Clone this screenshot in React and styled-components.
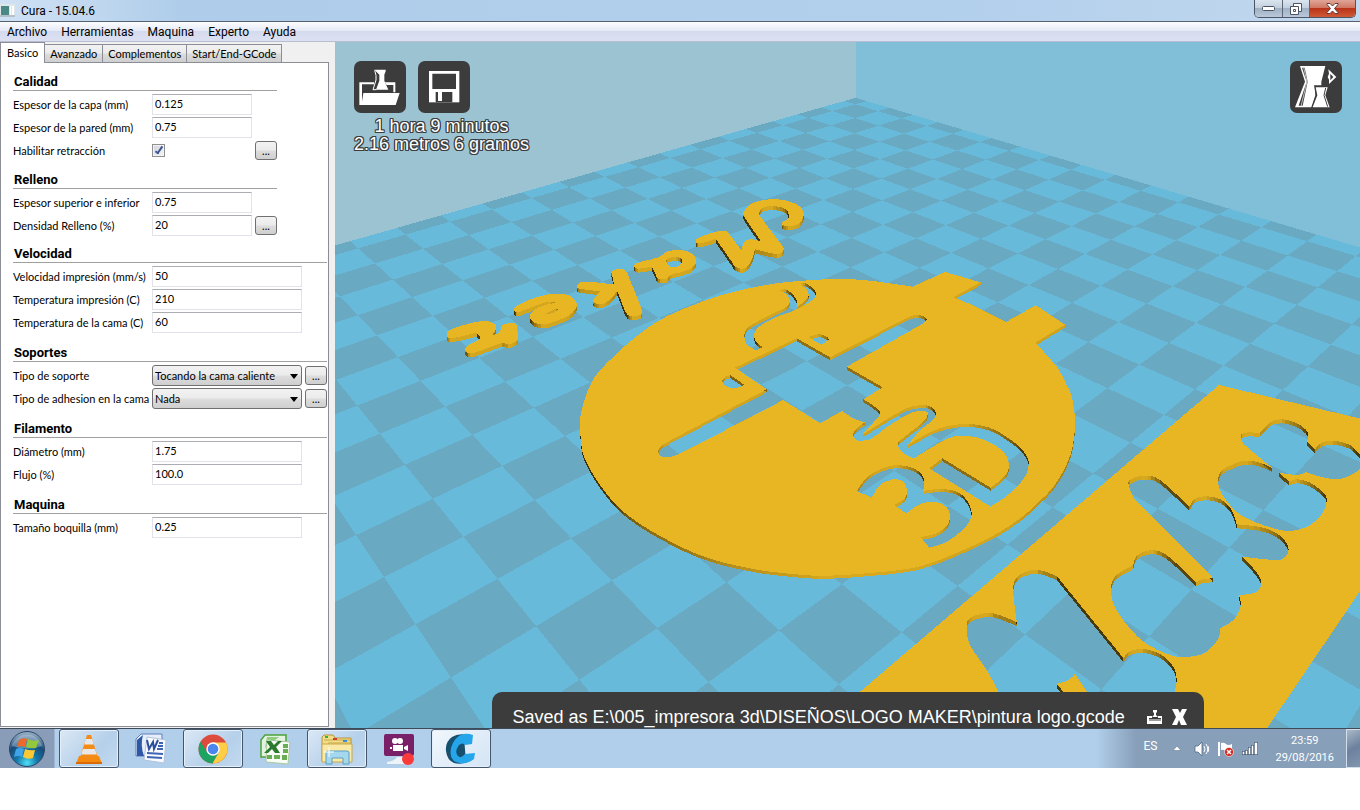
import React from "react";
import styled, { createGlobalStyle } from "styled-components";

const GlobalStyle = createGlobalStyle`
  *, *::before, *::after { box-sizing: border-box; }
  body { margin: 0; background: #fff; color: #000; font: 12px/16px Roboto, "Open Sans", sans-serif; }
  button, input, select { margin: 0; font: inherit; color: inherit; }
`;

/* ---------- window frame ---------- */

const Desktop = styled.div`
  display: flex;
  flex-direction: column;
  height: calc(100vh - 42px);
  min-height: 640px;
`;

const TitleBar = styled.header`
  display: flex;
  justify-content: space-between;
  align-items: flex-start;
  height: 22px;
  padding-right: 4px;
  border-bottom: 1px solid #56606e;
  background: linear-gradient(90deg, #cfe1f4 0, #c3d9f0 80px, #afcdea 180px, #b2cfec 70%, #c2d8ee 100%);
`;

const TitleText = styled.h1`
  display: flex;
  align-items: center;
  gap: 6px;
  height: 21px;
  margin: 0;
  font-size: 12px;
  font-weight: 400;
`;

const CaptionButtons = styled.div`
  display: flex;
  height: 18px;
  border: 1px solid #4b5565;
  border-top: 0;
  border-radius: 0 0 5px 5px;
  overflow: hidden;
`;

const CaptionButton = styled.button`
  display: grid;
  place-items: center;
  width: ${(p) => (p.$danger ? 46 : 27)}px;
  padding: 0;
  border: 0;
  border-left: ${(p) => (p.$first ? "0" : "1px solid #5c6675")};
  background: ${(p) =>
    p.$danger
      ? "linear-gradient(#e0a598 0, #d07863 45%, #b9341a 50%, #cf5a35 100%)"
      : "linear-gradient(#dbe5f0 0, #c2cfde 45%, #a0b1c5 50%, #b9c8da 100%)"};
`;

const MenuBar = styled.nav`
  display: flex;
  gap: 14px;
  height: 20px;
  padding: 1px 7px 0;
  border-bottom: 1px solid #b9bdd4;
  background: linear-gradient(#fcfdff 0, #e6eaf6 45%, #d5dbee 50%, #dce1f2 100%);
`;

const MenuItem = styled.button`
  padding: 0;
  border: 0;
  background: none;
  line-height: 18px;
`;

const Workspace = styled.main`
  display: flex;
  flex: 1;
  min-height: 0;
`;

/* ---------- settings panel ---------- */

const Sidebar = styled.aside`
  display: flex;
  flex-direction: column;
  flex: 0 0 335px;
  padding: 0 6px 1px 0;
  background: #f0f0f0;
  font: 11px/14px Lato, Roboto, sans-serif;
`;

const TabStrip = styled.div`
  display: flex;
  align-items: flex-end;
  height: 20px;
`;

const Tab = styled.button`
  position: relative;
  height: ${(p) => (p.$active ? 21 : 18)}px;
  margin: 0 -1px ${(p) => (p.$active ? -1 : 0)}px 0;
  padding: 0 ${(p) => (p.$active ? 6 : 5)}px;
  border: 1px solid #8b8e97;
  border-bottom: 0;
  background: ${(p) => (p.$active ? "#fff" : "linear-gradient(#f2f2f2 0, #ebebeb 48%, #dcdcdc 52%, #cfcfcf 100%)")};
  z-index: ${(p) => (p.$active ? 1 : 0)};
`;

const TabPage = styled.form`
  flex: 1;
  min-height: 0;
  padding: 0 1px 0 12px;
  border: 1px solid #8b8e97;
  background: #fff;
`;

const Group = styled.fieldset`
  width: ${(p) => (p.$wide ? 314 : 264)}px;
  margin: 0;
  padding: 0;
  border: 0;
`;

const GroupTitle = styled.legend`
  display: flex;
  align-items: flex-end;
  width: 100%;
  height: ${(p) => p.$height}px;
  margin-bottom: 3px;
  padding: 0 0 1px 1px;
  border-bottom: 1px solid #a0a0a0;
  font: 700 13px/15px Roboto, "Open Sans", sans-serif;
`;

const Row = styled.div`
  display: grid;
  grid-template-columns: 136px 1fr 22px;
  column-gap: 3px;
  align-items: center;
  height: 21px;
  margin-bottom: ${(p) => (p.$last ? 0 : 2)}px;
`;

const Label = styled.label`
  white-space: nowrap;
`;

const TextField = styled.input`
  width: 100%;
  height: 21px;
  padding: 0 2px 2px;
  border: 1px solid #e2e3ea;
  border-top-color: #abadb3;
  background: #fff;
`;

const CheckBox = styled.input`
  position: relative;
  appearance: none;
  width: 13px;
  height: 13px;
  border: 1px solid #8e8f8f;
  background: linear-gradient(135deg, #cfd3da, #f6f7f9);
  box-shadow: inset 0 0 0 1px #f4f4f4;
  &:checked::after {
    content: "";
    position: absolute;
    left: 4px;
    top: 0;
    width: 4px;
    height: 9px;
    border: solid #3f5693;
    border-width: 0 2px 2px 0;
    transform: rotate(35deg);
  }
`;

const SelectFrame = styled.span`
  position: relative;
  display: block;
  svg {
    position: absolute;
    right: 4px;
    top: 9px;
    pointer-events: none;
  }
`;

const Select = styled.select`
  appearance: none;
  display: block;
  width: 100%;
  height: 21px;
  padding: 0 16px 0 2px;
  border: 1px solid #707070;
  border-radius: 3px;
  background: linear-gradient(#f2f2f2 0, #ebebeb 48%, #dddddd 52%, #cfcfcf 100%);
`;

const MoreButton = styled.button`
  width: 22px;
  height: 19px;
  padding: 0;
  border: 1px solid #707070;
  border-radius: 3px;
  background: linear-gradient(#f2f2f2 0, #ebebeb 48%, #dddddd 52%, #cfcfcf 100%);
  line-height: 14px;
`;

/* ---------- 3D view ---------- */

const View = styled.section`
  position: relative;
  flex: 1;
  min-width: 0;
  overflow: hidden;
  background: #66b9d9;
  font: 18px/18px "Liberation Sans", Arial, sans-serif;
`;

const Scene = styled.svg`
  display: block;
  width: 100%;
  height: 100%;
`;

const Overlay = styled.div`
  position: absolute;
  inset: 0;
  display: flex;
  justify-content: space-between;
  align-items: flex-start;
  padding: 19px 18px 0 19px;
`;

const Tools = styled.div`
  display: flex;
  gap: 12px;
`;

const Tool = styled.button`
  display: block;
  width: 52px;
  height: 52px;
  padding: 0;
  border: 0;
  border-radius: 7px;
  background: #3c3c3c;
`;

const PrintInfo = styled.p`
  margin: 4px 0 0;
  color: #fff;
  text-align: center;
  text-shadow: 1px 0 #3c3c3c, -1px 0 #3c3c3c, 0 1px #3c3c3c, 0 -1px #3c3c3c, 1px 1px #3c3c3c, -1px -1px #3c3c3c,
    1px -1px #3c3c3c, -1px 1px #3c3c3c;
`;

const Notice = styled.div`
  position: absolute;
  left: 50%;
  bottom: 0;
  transform: translateX(-50%);
  display: flex;
  align-items: center;
  gap: 9px;
  min-width: 712px;
  height: 36px;
  padding: 13px 17px 0 21px;
  border-radius: 10px 10px 0 0;
  background: #3c3c3c;
  color: #fff;
  white-space: nowrap;
`;

const NoticeText = styled.span`
  flex: 1;
`;

const NoticeButton = styled.button`
  display: block;
  padding: 0;
  border: 0;
  background: none;
  svg { display: block; }
`;

/* ---------- task bar ---------- */

const TaskBar = styled.footer`
  display: flex;
  height: 40px;
  border-top: 1px solid #3f4a58;
  background: linear-gradient(90deg, #8a9db8 54px, #b1cfeb 55px);
`;

const StartButton = styled.button`
  display: grid;
  place-items: center;
  width: 54px;
  margin-right: 5px;
  padding: 0;
  border: 0;
  background: none;
`;

const TaskButton = styled.button`
  display: grid;
  place-items: center;
  width: 60px;
  margin-right: 2px;
  padding: 0;
  border: 1px solid ${(p) => (p.$open ? "#46566a" : "transparent")};
  border-radius: 3px;
  background: ${(p) =>
    p.$active
      ? "linear-gradient(135deg, #f2f7fc, #d3e4f5)"
      : p.$open
      ? "linear-gradient(135deg, #dbe8f5, #b5d0ea 60%, #c3daf0)"
      : "none"};
  box-shadow: ${(p) => (p.$open ? "inset 0 0 0 1px #e3effa" : "none")};
`;

const Tray = styled.div`
  display: flex;
  align-items: center;
  gap: 8px;
  margin-left: auto;
  padding-left: 48px;
  background: linear-gradient(90deg, #b1cfeb, #889fb9 40px);
  color: #fff;
`;

const Language = styled.span`
  margin: 0 8px 6px 0;
`;

const TrayIcon = styled.button`
  display: block;
  margin-right: ${(p) => (p.$apart ? 5 : 0)}px;
  padding: 0;
  border: 0;
  background: none;
  svg { display: block; }
`;

const Clock = styled.time`
  margin: 0 4px 0 9px;
  font-size: 11px;
  line-height: 17px;
  text-align: center;
`;

const ShowDesktop = styled.button`
  align-self: stretch;
  width: 14px;
  padding: 0;
  border: 1px solid #d3deea;
  border-right: 0;
  background: linear-gradient(150deg, #a9b8ca, #6c819d 50%, #8296b0);
`;

/* ---------- build platform geometry ---------- */

/* Perspective projection of platform cells to the view plane. */
const project = (u, v) => {
  const w = 1 - 0.02246 * u - 0.021414 * v;
  return [(855.4 + 2.9042 * u - 40.8128 * v) / w, (104.3 + 4.3636 * u + 4.2828 * v) / w];
};

const polygon = (points) => "M" + points.map((p) => p[0].toFixed(1) + " " + p[1].toFixed(1)).join("L") + "Z";

const LOW = -0.5;
const HIGH = 20;
const clampCell = (n) => Math.max(LOW, Math.min(HIGH, n));
const cell = (a, b, c, d) => polygon([project(a, b), project(c, b), project(c, d), project(a, d)]);

const floorPath = cell(LOW, LOW, HIGH, HIGH);
let darkCells = "";
for (let i = -1; i < 20; i++) {
  for (let j = -1; j < 20; j++) {
    if ((i + j) % 2 === 0) darkCells += cell(clampCell(i), clampCell(j), clampCell(i + 1), clampCell(j + 1));
  }
}

/*
 * Outlines are flat lists "x y" on a grid three times finer than the view,
 * relative to an origin. A trailing "c" marks a corner; other points are
 * joined by a smooth curve.
 */
const outline = (ox, oy, text) => {
  const pts = text.split(",").map((t) => {
    const [x, y, c] = t.trim().split(" ");
    return { x: ox + x / 3, y: oy + y / 3, c: c === "c" };
  });
  const n = pts.length;
  const out = [];
  for (let i = 0; i < n; i++) {
    const p1 = pts[i];
    const p2 = pts[(i + 1) % n];
    if (p1.c && p2.c) {
      out.push([p1.x, p1.y]);
      continue;
    }
    const p0 = p1.c ? p1 : pts[(i - 1 + n) % n];
    const p3 = p2.c ? p2 : pts[(i + 2) % n];
    for (let s = 0; s < 4; s++) {
      const t = s / 4;
      const mix = (a, b, c, d) =>
        0.5 * (2 * b + (c - a) * t + (2 * a - 5 * b + 4 * c - d) * t * t + (3 * b - a - 3 * c + d) * t * t * t);
      out.push([mix(p0.x, p1.x, p2.x, p3.x), mix(p0.y, p1.y, p2.y, p3.y)]);
    }
  }
  return out;
};

const GOLD = [232, 182, 34];
const LIGHT = [
  [0, 0.55],
  [35, 0.75],
  [60, 0.9],
  [90, 0.93],
  [105, 0.75],
  [121, 0.6],
  [138, 0.32],
  [180, 0.2],
];

/* Shade of a side wall, from the direction its edge runs in. */
const wallColour = ([ax, ay], [bx, by]) => {
  let nx = -(by - ay);
  let ny = bx - ax;
  if (ny < 0) {
    nx = -nx;
    ny = -ny;
  }
  const angle = (Math.atan2(ny, nx) * 180) / Math.PI;
  let k = 1;
  while (k < LIGHT.length - 1 && LIGHT[k][0] < angle) k++;
  const [a0, f0] = LIGHT[k - 1];
  const [a1, f1] = LIGHT[k];
  const f = f0 + ((f1 - f0) * (angle - a0)) / (a1 - a0);
  return `rgb(${GOLD.map((c) => Math.round(c * f)).join(",")})`;
};

/* The first `hidden` loops have side walls that face away from the camera. */
const Solid = ({ loops, depth, hidden = 0 }) => (
  <g>
    {loops.slice(hidden).map((loop, l) =>
      loop.map((p, i) => {
        const q = loop[(i + 1) % loop.length];
        return (
          <path
            key={l + "-" + i}
            d={polygon([p, q, [q[0], q[1] + depth], [p[0], p[1] + depth]])}
            fill={wallColour(p, q)}
          />
        );
      })
    )}
    <path d={loops.map(polygon).join("")} fill="#e8b622" fillRule="evenodd" />
  </g>
);

const disc = [
  outline(570, 260, "30 490,35 450,52 395,75 350,105 315,180 245,270 180,370 135,480 98,600 73,700 62,810 57,900 62,1028 80 c,1125 36 c,1232 67 c,1150 112 c,1210 137,1308 186 c,1397 136 c,1485 194 c,1396 248 c,1460 320,1490 375,1505 410,1515 485,1503 580,1458 670,1400 732,1340 783,1245 840,1100 903,990 930,800 946,700 945,550 927,405 891,270 828,160 755,90 675,42 590,33 540"),
  outline(640, 270, "420 62 c,437 58,458 73,470 92,472 110 c,495 92,506 78,500 58,480 42 c,495 39,518 55,527 70,520 88,470 118,400 145,355 172,342 195,350 218,368 231 c,348 242 c,320 222,313 195,325 172,370 145,430 116,447 102,450 90,440 72"),
  outline(640, 270, "470 205 c,570 262 c,805 142 c,830 134,852 140,860 150,845 163 c,620 290 c,728 352 c,670 388 c,700 407,721 428,705 452,668 493 c,780 425,825 408,865 407,887 426,880 448,840 482,803 525 c,850 498,900 475,950 464,1000 463,1060 478,1120 515,1155 550,1166 580,1155 620,1110 670,1052 710 c,868 595 c,907 565 c,1052 653 c,1095 618,1107 585,1090 545,1040 512,980 498,930 503,875 532,822 565 c,785 545,774 520,795 500,845 460,862 438,858 424,815 428,750 465,700 502,675 511,650 510,639 495,650 475,675 457 c,640 445,606 423 c,540 460 c,430 390 c,118 552 c,85 562,60 556,55 540,70 523 c,380 358 c,285 293 c"),
  outline(640, 270, "505 201 c,535 193,560 200,567 209 c,545 224 c"),
  outline(640, 270, "270 315 c,314 345 c,285 354,262 350,247 335,255 322"),
  outline(840, 390, "50 303 c,70 275,100 248,150 228,190 227,230 240,252 266,250 303 c,300 297,350 305,380 330,395 368,385 400,350 435,310 460,268 473 c,242 441 c,290 430,322 405,330 375,315 348,280 335,240 343,198 370 c,163 345 c,195 325,201 300,190 275,160 268,120 285,95 323 c"),
];

const letters = [
  outline(430, 190, "797 152,808 143,850 127,885 122,900 135,935 182 c,943 155,965 148,994 155 c,943 80,945 60,970 38,1020 28,1070 32,1110 50,1121 75,1110 98,1080 109,1058 105,1056 96,1074 86,1075 70,1065 56,1030 48,1000 53,988 68,995 85,1055 165,1061 180,1040 192,975 178 c,965 210,945 234,918 232,905 215,858 147 c,825 157,803 160"),
  outline(430, 190, "612 228,625 218,685 202,710 185,750 180,785 190,799 212,790 230,765 243,725 254,710 266,685 266,675 250,665 230 c,625 236"),
  outline(430, 190, "708 212,725 202,750 203,756 215,745 228,722 230"),
  outline(430, 190, "545 245,565 237,587 242,600 270,635 360,625 376,600 378,585 362,562 303 c,545 323,520 342,495 340,490 330,510 304 c,450 296,442 288,450 278,470 275,552 283 c,548 262"),
  outline(430, 190, "253 356,270 342,320 322,370 311,415 315,437 335,438 355,410 380,350 402,318 400,300 385,303 370,330 350,378 338 c,355 335,310 350,262 367"),
  outline(430, 190, "345 372 c,375 357,385 359 c,365 370"),
  outline(430, 190, "50 435,60 420,120 400,165 393,195 402,198 415,188 435 c,208 428,218 405,240 400,258 403,263 430,263 450,240 462,215 458 c,130 489,108 485,105 475,120 462,150 445,140 428 c,75 443,55 443"),
];

const plate = [
  outline(860, 380, "1077 15 c,1560 130 c,1560 545 c,1150 1150 c,-250 1149 c"),
  outline(860, 380, "1143 168,1155 158,1200 158 c,1230 128,1265 118,1310 130,1342 155,1342 185 c,1365 208 c,1385 188,1420 182,1470 195,1500 225,1510 245,1490 275,1440 297,1390 292,1338 277 c,1310 285,1258 278 c,1287 305 c,1310 298,1350 308,1390 338,1400 360,1390 395,1350 435,1290 453,1230 442,1150 410,1110 375,1080 330,1075 295,1090 268,1150 243,1200 248,1237 264 c,1190 225,1150 190"),
  outline(860, 380, "805 310,820 295,855 287,900 300,988 380 c,1005 357,1040 349,1085 360,1115 390,1130 433 c,1200 441,1250 460,1280 490,1285 515,1270 535,1240 540,1145 530 c,1180 565,1203 600,1200 625,1180 640,1137 645 c,1142 680,1120 720,1080 745 c,1075 775,1040 815,990 830,930 825,850 785,790 720,760 670,753 620,770 585,820 555 c,830 528,870 511,920 525,1008 607 c,1030 597,1060 595 c,820 352 c"),
  outline(860, 380, "320 740,327 718,350 705,400 700,470 726 c,460 640,465 600,490 578,535 570,590 588 c,790 834 c,810 814,850 807,900 822,940 860,950 900,945 935,940 1000 c,450 1000 c,415 935,380 870,330 795"),
  outline(860, 380, "590 912 c,625 900,645 882 c,700 965 c,640 970 c"),
];

const Platform = () => (
  <Scene viewBox="335 42 1025 686" preserveAspectRatio="xMidYMid slice" shapeRendering="crispEdges" role="img" aria-label="Vista 3D">
    <path d="M-200 0H856V400H-200Z" fill="#9bc3d2" />
    <path d="M856 0H1700V500H856Z" fill="#80bfd7" />
    <path d={floorPath} fill="#67bada" />
    <path d={darkCells} fill="#69a9c2" />
    <Solid loops={letters} depth={4} />
    <Solid loops={disc} depth={3} />
    <Solid loops={plate} depth={4} hidden={1} />
  </Scene>
);

/* ---------- icons ---------- */

const LoadIcon = () => (
  <svg width="52" height="52" viewBox="0 0 156 156" fill="#fff">
    <path d="M16 132V64h44v6H24v52l4-26h109l-12 36z" />
    <path d="M92 64h32v30h-6V72H98z" />
    <path d="M61 26h34v5l-4 10v18l12 27H66l10-27V41z" />
    <path d="M62 28l4 15v14l-9 29h10" fill="none" stroke="#fff" strokeWidth="3" />
  </svg>
);

const SaveIcon = () => (
  <svg width="52" height="52" viewBox="0 0 156 156">
    <path d="M33 30h91v94H33z" fill="#fff" />
    <path d="M43 38h71v46H43zM53 93h50v31H53z" fill="#3c3c3c" />
    <path d="M60 93h12v27H60z" fill="#fff" />
  </svg>
);

const ViewModeIcon = () => (
  <svg width="52" height="52" viewBox="0 0 156 156" fill="#fff">
    <path d="M30 15h76L94 62v16H74l2 25-12 36H15l30-77z" />
    <path d="M36 20l14 42-24 72h12l15-72-9-42z" fill="#3c3c3c" />
    <path d="M41 20l10 42-18 74" fill="none" stroke="#fff" strokeWidth="2" />
    <path d="M72 73h45l-9 29 15 42H63l15-42z" fill="#3c3c3c" />
    <path d="M77 79h36l-7 24 13 36H68l14-36z" />
    <path d="M107 81l-5 22 11 34" fill="none" stroke="#3c3c3c" strokeWidth="3" />
    <path d="M115 25l24 23-22 21V56l-4-8 4-10zM121 38v20l9-10z" fillRule="evenodd" />
  </svg>
);

const SmallEjectIcon = () => (
  <svg width="16" height="16" viewBox="0 0 16 16">
    <path d="M0 7h5v2H2v1h12V9h-3V7h4v8H0zM6 1h4v2l-1 1v2l2 2H5l2-2V4L6 3z" fill="#fff" />
    <path d="M2 11h12" stroke="#3c3c3c" strokeWidth="1" />
  </svg>
);

const CloseNoticeIcon = () => (
  <svg width="15" height="16" viewBox="0 0 15 16">
    <path d="M0 0h6l2 4 2-4h5l-4 8 4 8h-6l-2-5-2 5H0l4-8z" fill="#fff" />
  </svg>
);

const StartOrb = () => (
  <svg width="38" height="38" viewBox="0 0 38 38">
    <defs>
      <radialGradient id="orb" cx="50%" cy="90%" r="85%">
        <stop offset="0" stopColor="#4fe0f5" />
        <stop offset="0.35" stopColor="#1478ab" />
        <stop offset="0.7" stopColor="#184a78" />
        <stop offset="1" stopColor="#8ea9c2" />
      </radialGradient>
    </defs>
    <circle cx="19" cy="19" r="17.5" fill="url(#orb)" stroke="#2a4665" />
    <path d="M4 16a15.5 15.5 0 0 1 30 0q-15 5-30 0" fill="#fff" opacity=".3" />
    <path d="M11 10q4-3 8-1l-2 8q-4-2-8 0z" fill="#ee6a2a" />
    <path d="M20 9q5 3 11 1l-3 8q-5 1-10-1z" fill="#93c83d" />
    <path d="M8 19q4-2 8 0l-2 8q-4-2-8 0z" fill="#3fa3e8" />
    <path d="M17 19q5 2 10 1l-2 8q-5 2-10-1z" fill="#fbc934" />
  </svg>
);

const VlcIcon = () => (
  <svg width="32" height="32" viewBox="0 0 32 32">
    <path d="M6 23h20l3 8H3z" fill="#f58a0c" />
    <path d="M3 29h26v2H3z" fill="#d96a05" />
    <path d="M14 2h4l7 23q-9 4-18 0z" fill="#f48b17" />
    <path d="M12.800 6h6.400l1.600 5.500h-9.600zM10 16h12l1.800 5.500H8.200z" fill="#e8e8e8" />
  </svg>
);

const WordIcon = () => (
  <svg width="32" height="32" viewBox="0 0 32 32">
    <path d="M6 1h21v22H1V6z" fill="#e6eefa" stroke="#5f7fbd" />
    <path d="M8 2Q5 12 9 23H2V7z" fill="#2e58a6" />
    <path d="M12 4l19 3-2 23-20-3z" fill="#f7faff" stroke="#b4c3dd" />
    <path d="M12 7l2 9 4-7 1 7 4-9" fill="none" stroke="#2a4f9c" strokeWidth="2" />
    <path d="M24 10h4M23 13h5M22 16h6M12 20l16 1M12 24l15 1" stroke="#3e65b5" strokeWidth="2" />
  </svg>
);

const ChromeIcon = () => (
  <svg width="30" height="30" viewBox="0 0 30 30">
    <circle cx="15" cy="15" r="14.500" fill="#dd4b3e" />
    <path d="M2.500 7.700A14.500 14.500 0 0 0 14.500 29.500L21.500 18 15 15 9 18z" fill="#1da462" />
    <path d="M15 8.500h13A14.500 14.500 0 0 1 14.500 29.500L21 18z" fill="#ffcd46" />
    <circle cx="15" cy="15" r="6.700" fill="#fff" />
    <circle cx="15" cy="15" r="5.300" fill="#4a86ee" />
  </svg>
);

const ExcelIcon = () => (
  <svg width="32" height="32" viewBox="0 0 32 32">
    <path d="M6 2h21v22H2V7z" fill="#e4f2e0" stroke="#4ba33a" strokeWidth="1.500" />
    <path d="M8 4h12L6 15z" fill="#8fce7f" />
    <path d="M8 7l23 2-2 22-22-2z" fill="#f8fcf6" stroke="#a9c9a0" />
    <path d="M7 8h5l3 4 4-4h4l-6 6 4 6h-5l-3-4-4 4H5l6-6z" fill="#2b7a2d" />
    <path d="M24 11h5v4h-5zM24 16h5v4h-5zM8 22h5v4H8zM15 22h6v4h-6zM23 22h5v5h-5z" fill="#69ad55" />
  </svg>
);

const ExplorerIcon = () => (
  <svg width="34" height="32" viewBox="0 0 34 32">
    <path d="M2 4l2-2h9l2 3h16v23H2z" fill="#f3dc86" stroke="#b5953d" />
    <path d="M4 7h27M8 10h24" stroke="#c9a94e" />
    <path d="M5 3h3v2H5z" fill="#2fb34a" />
    <path d="M13 5h4v2h-4z" fill="#d33d2f" />
    <path d="M23 7h4v2h-4z" fill="#3a8fd6" />
    <path d="M2 11h30v18H2z" fill="#fae9a5" stroke="#c9a94e" />
    <path d="M6 31V20q0-2 2-2h19q2 0 2 2v11h-6v-6H12v6z" fill="#a5d8ee" stroke="#5b9fc4" />
    <path d="M9 14v10M4 19h10" stroke="#fff" />
  </svg>
);

const RecorderIcon = () => (
  <svg width="32" height="32" viewBox="0 0 32 32">
    <path d="M4 29q8-1 10-5h5q2 4 9 5v2H4z" fill="#eef3f8" />
    <rect x="1" y="1" width="30" height="22" rx="2" fill="#7a2068" />
    <circle cx="12" cy="8" r="3" fill="#fff" />
    <circle cx="17" cy="8" r="3" fill="#fff" />
    <path d="M10 12h10v6H10zM7 14h2v2H7zM21 14l4-2v6l-4-2z" fill="#fff" />
    <circle cx="25" cy="26" r="6" fill="#fb3a3c" />
  </svg>
);

const CuraIcon = () => (
  <svg width="34" height="32" viewBox="0 0 34 32">
    <path d="M24 2Q14 0 8 4Q1 9 2 18Q3 27 10 30Q17 32 22 29L20 4z" fill="#174f6e" />
    <path d="M29 2l-1 9-7 1q-2-3-6 0-5 7-1 11 3 3 7-2l10-1-1 6q-9 7-18 3-7-3-5-14 3-11 12-14 5-1 10 1z" fill="#25a5ea" />
  </svg>
);

const tasks = [
  { name: "VLC", icon: VlcIcon, open: true },
  { name: "Word", icon: WordIcon },
  { name: "Chrome", icon: ChromeIcon, open: true },
  { name: "Excel", icon: ExcelIcon },
  { name: "Explorador", icon: ExplorerIcon, open: true },
  { name: "Grabador", icon: RecorderIcon },
  { name: "Cura", icon: CuraIcon, open: true, active: true },
];

/* ---------- settings ---------- */

const groups = [
  {
    title: "Calidad",
    titleHeight: 28,
    rows: [
      { id: "capa", label: "Espesor de la capa (mm)", value: "0.125" },
      { id: "pared", label: "Espesor de la pared (mm)", value: "0.75" },
      { id: "retraccion", label: "Habilitar retracción", check: true, more: true },
    ],
  },
  {
    title: "Relleno",
    titleHeight: 28,
    rows: [
      { id: "superior", label: "Espesor superior e inferior", value: "0.75" },
      { id: "densidad", label: "Densidad Relleno (%)", value: "20", more: true },
    ],
  },
  {
    title: "Velocidad",
    titleHeight: 27,
    wide: true,
    rows: [
      { id: "velocidad", label: "Velocidad impresión (mm/s)", value: "50" },
      { id: "temperatura", label: "Temperatura impresión (C)", value: "210" },
      { id: "cama", label: "Temperatura de la cama (C)", value: "60" },
    ],
  },
  {
    title: "Soportes",
    titleHeight: 29,
    wide: true,
    rows: [
      { id: "soporte", label: "Tipo de soporte", option: "Tocando la cama caliente", more: true },
      { id: "adhesion", label: "Tipo de adhesion en la cama", option: "Nada", more: true },
    ],
  },
  {
    title: "Filamento",
    titleHeight: 29,
    wide: true,
    rows: [
      { id: "diametro", label: "Diámetro (mm)", value: "1.75" },
      { id: "flujo", label: "Flujo (%)", value: "100.0" },
    ],
  },
  {
    title: "Maquina",
    titleHeight: 29,
    wide: true,
    rows: [{ id: "boquilla", label: "Tamaño boquilla (mm)", value: "0.25" }],
  },
];

const Field = ({ row }) => {
  if (row.check) return <CheckBox id={row.id} type="checkbox" defaultChecked />;
  if (row.option)
    return (
      <SelectFrame>
        <Select id={row.id}>
          <option>{row.option}</option>
        </Select>
        <svg width="8" height="5" viewBox="0 0 8 5">
          <path d="M0 0h8L4 5z" />
        </svg>
      </SelectFrame>
    );
  return <TextField id={row.id} type="text" defaultValue={row.value} />;
};

const Settings = () => (
  <TabPage>
    {groups.map((group) => (
      <Group key={group.title} $wide={group.wide}>
        <GroupTitle $height={group.titleHeight}>{group.title}</GroupTitle>
        {group.rows.map((row, i) => (
          <Row key={row.id} $last={i === group.rows.length - 1}>
            <Label htmlFor={row.id}>{row.label}</Label>
            <Field row={row} />
            {row.more && (
              <MoreButton type="button" aria-label={"Opciones: " + row.label}>
                ...
              </MoreButton>
            )}
          </Row>
        ))}
      </Group>
    ))}
  </TabPage>
);

export default function App() {
  return (
    <Desktop>
      <GlobalStyle />
      <TitleBar>
        <TitleText>
          <svg width="15" height="13" viewBox="0 0 15 13">
            <path d="M0 0h15v13H0z" fill="#dfe6ea" />
            <path d="M1 2h8v9H1z" fill="#4a8a86" />
            <path d="M10 2h1v9h-1zM12 2h2v9h-2z" fill="#fff" />
            <path d="M0 12h15" stroke="#8a98a8" />
          </svg>
          Cura - 15.04.6
        </TitleText>
        <CaptionButtons>
          <CaptionButton $first aria-label="Minimizar">
            <svg width="13" height="5" viewBox="0 0 13 5">
              <rect x="0.500" y="0.500" width="12" height="4" rx="1" fill="#fff" stroke="#4b5565" />
            </svg>
          </CaptionButton>
          <CaptionButton aria-label="Restaurar">
            <svg width="12" height="12" viewBox="0 0 12 12" fill="#fff" stroke="#4b5565">
              <path d="M3.500 0.500h8v8h-8z" />
              <path d="M0.500 3.500h8v8h-8zM3.500 6.500h2v2h-2z" />
            </svg>
          </CaptionButton>
          <CaptionButton $danger aria-label="Cerrar">
            <svg width="13" height="11" viewBox="0 0 13 11">
              <path d="M1 0.500h3l2.500 2.500L9 0.500h3v1L8.500 5.500 12 9.500v1H9L6.500 8 4 10.500H1v-1l3.500-4L1 1.500z" fill="#fff" stroke="#5b3a3a" />
            </svg>
          </CaptionButton>
        </CaptionButtons>
      </TitleBar>
      <MenuBar>
        {["Archivo", "Herramientas", "Maquina", "Experto", "Ayuda"].map((m) => (
          <MenuItem key={m}>{m}</MenuItem>
        ))}
      </MenuBar>
      <Workspace>
        <Sidebar>
          <TabStrip role="tablist">
            {["Basico", "Avanzado", "Complementos", "Start/End-GCode"].map((t, i) => (
              <Tab key={t} role="tab" aria-selected={i === 0} $active={i === 0}>
                {t}
              </Tab>
            ))}
          </TabStrip>
          <Settings />
        </Sidebar>
        <View>
          <Platform />
          <Overlay>
            <div>
              <Tools>
                <Tool aria-label="Cargar">
                  <LoadIcon />
                </Tool>
                <Tool aria-label="Guardar">
                  <SaveIcon />
                </Tool>
              </Tools>
              <PrintInfo>
                1 hora 9 minutos
                <br />
                2.16 metros 6 gramos
              </PrintInfo>
            </div>
            <Tool aria-label="Modo de vista">
              <ViewModeIcon />
            </Tool>
          </Overlay>
          <Notice role="status">
            <NoticeText>Saved as E:\005_impresora 3d\DISEÑOS\LOGO MAKER\pintura logo.gcode</NoticeText>
            <NoticeButton aria-label="Expulsar">
              <SmallEjectIcon />
            </NoticeButton>
            <NoticeButton aria-label="Cerrar aviso">
              <CloseNoticeIcon />
            </NoticeButton>
          </Notice>
        </View>
      </Workspace>
      <TaskBar>
        <StartButton aria-label="Inicio">
          <StartOrb />
        </StartButton>
        {tasks.map(({ name, icon: Icon, open, active }) => (
          <TaskButton key={name} aria-label={name} $open={open} $active={active}>
            <Icon />
          </TaskButton>
        ))}
        <Tray>
          <Language>ES</Language>
          <TrayIcon $apart aria-label="Iconos ocultos">
            <svg width="8" height="5" viewBox="0 0 8 5">
              <path d="M0 4.500L4 0l4 4.500z" fill="#fff" stroke="#5a6d86" strokeWidth="0.500" />
            </svg>
          </TrayIcon>
          <TrayIcon aria-label="Volumen">
            <svg width="16" height="16" viewBox="0 0 16 16">
              <path d="M1 5h3l4-4v14l-4-4H1z" fill="#fff" stroke="#56677f" strokeWidth="0.800" />
              <path d="M10 5q2 3 0 6M12 3q3.500 5 0 10M14 5q1.500 3 0 6" fill="none" stroke="#fff" />
            </svg>
          </TrayIcon>
          <TrayIcon aria-label="Centro de actividades">
            <svg width="16" height="16" viewBox="0 0 16 16">
              <path d="M1 1v14" stroke="#fff" strokeWidth="2" />
              <path d="M3 2q3-1 5 1t6 0v7q-3 2-6 0T3 9z" fill="#fff" />
              <circle cx="11" cy="11" r="4.500" fill="#d6251c" stroke="#fff" strokeWidth="0.600" />
              <path d="M9 9l4 4M13 9l-4 4" stroke="#fff" strokeWidth="1.500" />
            </svg>
          </TrayIcon>
          <TrayIcon aria-label="Red">
            <svg width="16" height="13" viewBox="0 0 16 13">
              <path d="M0 9h3v4H0zM3 8h3v5H3zM6 5h3v8H6zM9 3h3v10H9zM12 0h4v13h-4z" fill="#56677f" />
              <path d="M1 10h1v2H1zM4 9h1v3H4zM7 6h1v6H7zM10 4h1v8h-1zM13 1h2v11h-2z" fill="#fff" stroke="#fff" strokeWidth="0.500" />
            </svg>
          </TrayIcon>
          <Clock dateTime="2016-08-29T23:59">
            23:59
            <br />
            29/08/2016
          </Clock>
          <ShowDesktop aria-label="Mostrar escritorio" />
        </Tray>
      </TaskBar>
    </Desktop>
  );
}
